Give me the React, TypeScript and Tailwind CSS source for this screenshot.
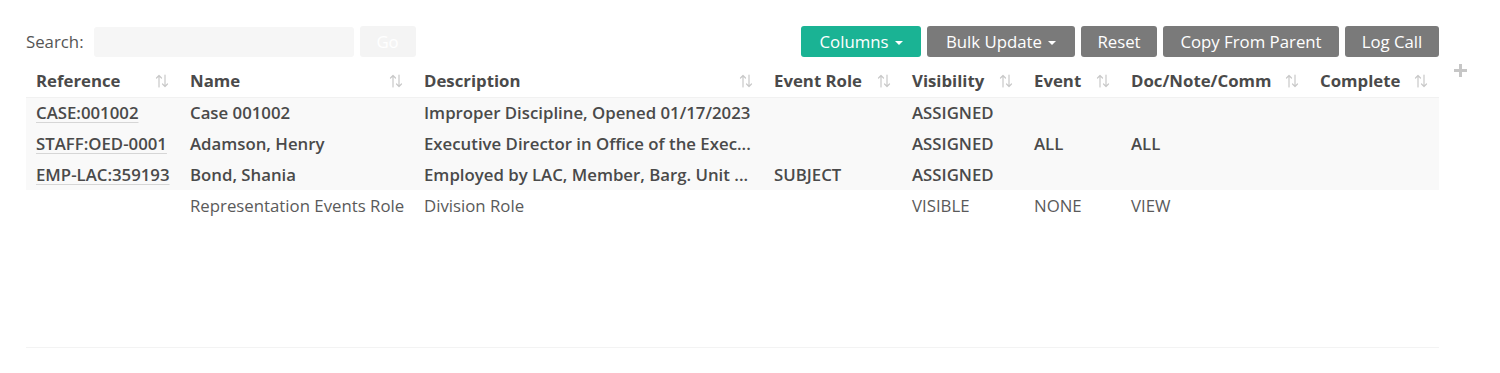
import React from "react";

type Row = {
  ref?: string;
  name: string;
  description: string;
  eventRole?: string;
  visibility: string;
  event?: string;
  doc?: string;
  complete?: string;
  bold?: boolean;
};

const rows: Row[] = [
  { ref: "CASE:001002", name: "Case 001002", description: "Improper Discipline, Opened 01/17/2023", visibility: "ASSIGNED", bold: true },
  { ref: "STAFF:OED-0001", name: "Adamson, Henry", description: "Executive Director in Office of the Exec...", visibility: "ASSIGNED", event: "ALL", doc: "ALL", bold: true },
  { ref: "EMP-LAC:359193", name: "Bond, Shania", description: "Employed by LAC, Member, Barg. Unit ...", eventRole: "SUBJECT", visibility: "ASSIGNED", bold: true },
  { name: "Representation Events Role", description: "Division Role", visibility: "VISIBLE", event: "NONE", doc: "VIEW" },
];

const columns = [
  { label: "Reference", w: "w-[154px]" },
  { label: "Name", w: "w-[234px]" },
  { label: "Description", w: "w-[350px]" },
  { label: "Event Role", w: "w-[138px]" },
  { label: "Visibility", w: "w-[122px]" },
  { label: "Event", w: "w-[97px]" },
  { label: "Doc/Note/Comm", w: "w-[189px]" },
  { label: "Complete", w: "w-[129px]" },
];

function SortIcon() {
  return (
    <svg width="16" height="16" viewBox="0 0 16 16" fill="none" stroke="#c9c9c9" strokeWidth="1.2" strokeLinecap="round" strokeLinejoin="round">
      <path d="M5 14V2.5M2.5 5L5 2.5L7.5 5" />
      <path d="M11 2v11.5M8.5 11L11 13.5L13.5 11" />
    </svg>
  );
}

export default function App() {
  return (
    <div className="min-h-[373px] bg-white font-['Open_Sans',sans-serif] text-[16.8px] text-[#555]">
      <div className="pl-[26px] pr-[61px] pt-[26px]">
        <div className="flex items-center justify-between">
          <div className="flex items-center">
            <span className="mr-[10px] text-[#555]">Search:</span>
            <input className="h-[30px] w-[260px] rounded-[3px] bg-[#f6f6f6] px-2 outline-none" />
            <button className="ml-[6px] h-[31px] w-[56px] rounded-[3px] bg-[#f4f4f4] text-white">Go</button>
          </div>
          <div className="flex items-center gap-[6px]">
            <button className="flex h-[31px] w-[120px] items-center justify-center gap-[6px] rounded-[3px] bg-[#1ab394] text-white">
              Columns
              <span className="mt-[2px] border-x-[4px] border-t-[4px] border-x-transparent border-t-white" />
            </button>
            <button className="flex h-[31px] w-[148px] items-center justify-center gap-[6px] rounded-[3px] bg-[#7a7a7a] text-white">
              Bulk Update
              <span className="mt-[2px] border-x-[4px] border-t-[4px] border-x-transparent border-t-white" />
            </button>
            <button className="h-[31px] w-[76px] rounded-[3px] bg-[#7a7a7a] text-white">Reset</button>
            <button className="h-[31px] w-[176px] rounded-[3px] bg-[#7a7a7a] text-white">Copy From Parent</button>
            <button className="h-[31px] w-[94px] rounded-[3px] bg-[#7a7a7a] text-white">Log Call</button>
          </div>
        </div>

        <div className="relative mt-[8px]">
          <table className="w-[1413px] table-fixed border-collapse">
            <thead>
              <tr className="border-b border-[#f1f1f1]">
                {columns.map((c) => (
                  <th key={c.label} className={`${c.w} h-[32px] px-[10px] text-left font-bold text-[#4a4a4a]`}>
                    <div className="flex items-center justify-between">
                      <span>{c.label}</span>
                      <SortIcon />
                    </div>
                  </th>
                ))}
              </tr>
            </thead>
            <tbody>
              {rows.map((r, i) => (
                <tr key={i} className={r.bold ? "bg-[#f9f9f9] font-semibold text-[#4a4a4a]" : "text-[#5a5a5a]"}>
                  <td className="h-[31px] whitespace-nowrap px-[10px]">
                    {r.ref ? (
                      <span className="underline decoration-[#d6d6d6] decoration-1 underline-offset-[3px]">{r.ref}</span>
                    ) : null}
                  </td>
                  <td className="whitespace-nowrap px-[10px]">{r.name}</td>
                  <td className="whitespace-nowrap px-[10px]">{r.description}</td>
                  <td className="whitespace-nowrap px-[10px]">{r.eventRole ?? ""}</td>
                  <td className="whitespace-nowrap px-[10px]">{r.visibility}</td>
                  <td className="whitespace-nowrap px-[10px]">{r.event ?? ""}</td>
                  <td className="whitespace-nowrap px-[10px]">{r.doc ?? ""}</td>
                  <td className="whitespace-nowrap px-[10px]">{r.complete ?? ""}</td>
                </tr>
              ))}
            </tbody>
          </table>
          <svg className="absolute left-[1428px] top-[-1px]" width="13" height="13" viewBox="0 0 13 13" fill="none" stroke="#c6c6c6" strokeWidth="3">
            <path d="M6.5 0v13M0 6.5h13" />
          </svg>
          <div className="mt-[126px] h-px w-[1413px] bg-[#f3f3f3]" />
        </div>
      </div>
    </div>
  );
}
